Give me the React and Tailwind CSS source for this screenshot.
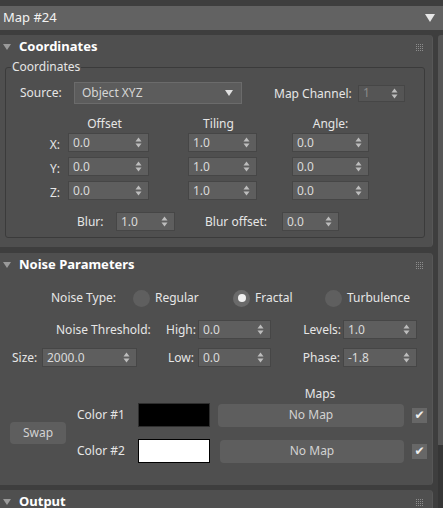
import React from "react";

const Arrows = () => (
  <svg width="7" height="11" viewBox="0 0 7 11" className="shrink-0">
    <polygon points="0.5,4.5 3.5,0.5 6.5,4.5" fill="#bdbdbd" />
    <polygon points="0.5,6.5 3.5,10.5 6.5,6.5" fill="#bdbdbd" />
  </svg>
);

const Spin = ({ v, w, h = "h-[19px]", dim }) => (
  <div
    className={`${w} ${h} flex items-center justify-between border border-[#464646] pl-[4px] pr-[6px] ${
      dim ? "bg-[#555555] text-[#8a8a8a]" : "bg-[#5e5e5e] text-[#dadada]"
    }`}
  >
    <span className="leading-none">{v}</span>
    <Arrows />
  </div>
);

const Dots = () => (
  <svg width="7" height="7" viewBox="0 0 7 7" className="ml-auto mr-[9px]">
    {[0, 2, 4, 6].map((y) =>
      [0, 2, 4, 6].map((x) => (
        <rect key={`${x}-${y}`} x={x} y={y} width="1" height="1" fill="#8c8c8c" />
      ))
    )}
  </svg>
);

const RollHead = ({ title }) => (
  <div className="h-[24px] flex items-center">
    <svg width="8" height="6" viewBox="0 0 8 6" className="ml-[3px]">
      <polygon points="0,0 8,0 4,6" fill="#9a9a9a" />
    </svg>
    <span className="ml-[8px] text-[13px] font-bold text-white">{title}</span>
    <Dots />
  </div>
);

const Radio = ({ label, on, w }) => (
  <div className={`${w} flex items-center`}>
    <div
      className={`w-[17px] h-[17px] rounded-full flex items-center justify-center ${
        on ? "bg-[#6a6a6a]" : "bg-[#5f5f5f]"
      }`}
    >
      {on && <div className="w-[8px] h-[8px] rounded-full bg-[#f0f0f0]" />}
    </div>
    <span className="ml-[5px]">{label}</span>
  </div>
);

const Check = () => (
  <div className="w-[15px] h-[15px] bg-[#676767] flex items-center justify-center text-[12px] leading-none text-[#eeeeee]">
    ✔
  </div>
);

export default function App() {
  return (
    <div
      className="w-[443px] h-[508px] overflow-hidden bg-[#3e3e3e] text-[12px] text-[#e6e6e6] select-none"
      style={{ fontFamily: '"Noto Sans", "DejaVu Sans", sans-serif' }}
    >
      {/* Title bar */}
      <div className="mt-[6px] h-[24px] bg-[#626262] flex items-center px-[3px]">
        <span className="text-[13px] text-[#f2f2f2]">Map #24</span>
        <svg width="10" height="8" viewBox="0 0 10 8" className="ml-auto mr-[5px]">
          <polygon points="0,0 10,0 5,8" fill="#e6e6e6" />
        </svg>
      </div>

      <div className="mt-[5px] flex">
        <div className="w-[433px] flex flex-col">
          {/* Coordinates rollout */}
          <div className="bg-[#4f4f4f] rounded-tr-[4px] rounded-br-[4px] border-r border-[#575757]">
            <RollHead title="Coordinates" />
            <fieldset className="ml-[5px] w-[420px] border border-[#3b3b3b] rounded-[3px] pb-[6px]">
              <legend className="ml-[5px] px-[1px] leading-[16px]">Coordinates</legend>

              <div className="mt-[7px] h-[22px] flex items-center pl-[14px]">
                <span className="w-[54px]">Source:</span>
                <div className="w-[168px] h-[22px] bg-[#5c5c5c] border border-[#6b6b6b] flex items-center pl-[7px] pr-[8px] text-[#d6d6d6]">
                  <span>Object XYZ</span>
                  <svg width="8" height="6" viewBox="0 0 8 6" className="ml-auto">
                    <polygon points="0,0 8,0 4,6" fill="#e0e0e0" />
                  </svg>
                </div>
                <span className="ml-[32px] w-[84px] pt-[2px]">Map Channel:</span>
                <Spin v="1" w="w-[47px]" h="h-[17px]" dim />
              </div>

              <div className="mt-[11px] h-[18px] flex items-center">
                <div className="w-[62px]" />
                <div className="w-[81px] pr-[8px] text-center">Offset</div>
                <div className="w-[39px]" />
                <div className="w-[69px] pr-[8px] text-center">Tiling</div>
                <div className="w-[35px]" />
                <div className="w-[77px] text-center">Angle:</div>
              </div>

              {[
                ["X:", "mt-0"],
                ["Y:", "mt-[5px]"],
                ["Z:", "mt-[5px]"],
              ].map(([l, m]) => (
                <div key={l} className={`${m} h-[19px] flex items-center`}>
                  <span className="w-[62px] text-right pr-[8px] pt-[4px]">{l}</span>
                  <Spin v="0.0" w="w-[81px]" />
                  <div className="w-[39px]" />
                  <Spin v="1.0" w="w-[69px]" />
                  <div className="w-[35px]" />
                  <Spin v="0.0" w="w-[77px]" />
                </div>
              ))}

              <div className="mt-[12px] h-[19px] flex items-center pl-[71px]">
                <span className="w-[39px]">Blur:</span>
                <Spin v="1.0" w="w-[59px]" />
                <span className="ml-[30px] w-[77px]">Blur offset:</span>
                <Spin v="0.0" w="w-[57px]" />
              </div>
            </fieldset>
            <div className="h-[9px]" />
          </div>

          {/* Noise Parameters rollout */}
          <div className="mt-[6px] bg-[#4f4f4f] rounded-tr-[4px] rounded-br-[4px] border-r border-[#575757] pb-[22px]">
            <RollHead title="Noise Parameters" />

            <div className="mt-[12px] h-[18px] flex items-center pl-[51px]">
              <span className="w-[82px]">Noise Type:</span>
              <Radio label="Regular" w="w-[100px]" />
              <Radio label="Fractal" w="w-[92px]" on />
              <Radio label="Turbulence" w="w-[100px]" />
            </div>

            <div className="mt-[13px] h-[19px] flex items-center pl-[56px]">
              <span className="w-[110px]">Noise Threshold:</span>
              <span className="w-[32px]">High:</span>
              <Spin v="0.0" w="w-[73px]" />
              <span className="w-[72px] text-right pr-[2px]">Levels:</span>
              <Spin v="1.0" w="w-[74px]" />
            </div>

            <div className="mt-[9px] h-[19px] flex items-center pl-[12px]">
              <span className="w-[30px]">Size:</span>
              <Spin v="2000.0" w="w-[95px]" />
              <span className="w-[61px] text-right pr-[4px]">Low:</span>
              <Spin v="0.0" w="w-[73px]" />
              <span className="w-[72px] text-right pr-[3px]">Phase:</span>
              <Spin v="-1.8" w="w-[74px]" />
            </div>

            <div className="mt-[19px] h-[16px] flex items-center">
              <span className="ml-[218px] w-[204px] text-center">Maps</span>
            </div>

            <div className="mt-[1px] flex items-center">
              <div className="ml-[10px] w-[56px] h-[22px] rounded-[4px] bg-[#5e5e5e] flex items-center justify-center text-[#d2d2d2]">
                Swap
              </div>
              <div className="ml-[11px] flex flex-col gap-[12px]">
                <div className="h-[24px] flex items-center">
                  <span className="w-[61px]">Color #1</span>
                  <div className="w-[72px] h-[24px] bg-black border border-[#2e2e2e]" />
                  <div className="ml-[8px] w-[186px] h-[23px] rounded-[4px] bg-[#5e5e5e] flex items-center justify-center text-[#d2d2d2]">
                    No Map
                  </div>
                  <div className="ml-[8px]">
                    <Check />
                  </div>
                </div>
                <div className="h-[24px] flex items-center">
                  <span className="w-[61px]">Color #2</span>
                  <div className="w-[72px] h-[24px] bg-white border border-black" />
                  <div className="ml-[10px] w-[184px] h-[23px] rounded-[4px] bg-[#5e5e5e] flex items-center justify-center text-[#d2d2d2]">
                    No Map
                  </div>
                  <div className="ml-[8px]">
                    <Check />
                  </div>
                </div>
              </div>
            </div>
          </div>

          {/* Output rollout */}
          <div className="mt-[5px] bg-[#4f4f4f] rounded-tr-[4px] border-r border-[#575757] h-[40px]">
            <RollHead title="Output" />
          </div>
        </div>

        {/* Scrollbar */}
        <div className="ml-[5px] w-[5px] flex flex-col">
          <div className="h-[410px] bg-[#565656] rounded-tl-[3px]" />
          <div className="flex-1 bg-[#363636]" />
        </div>
      </div>
    </div>
  );
}
